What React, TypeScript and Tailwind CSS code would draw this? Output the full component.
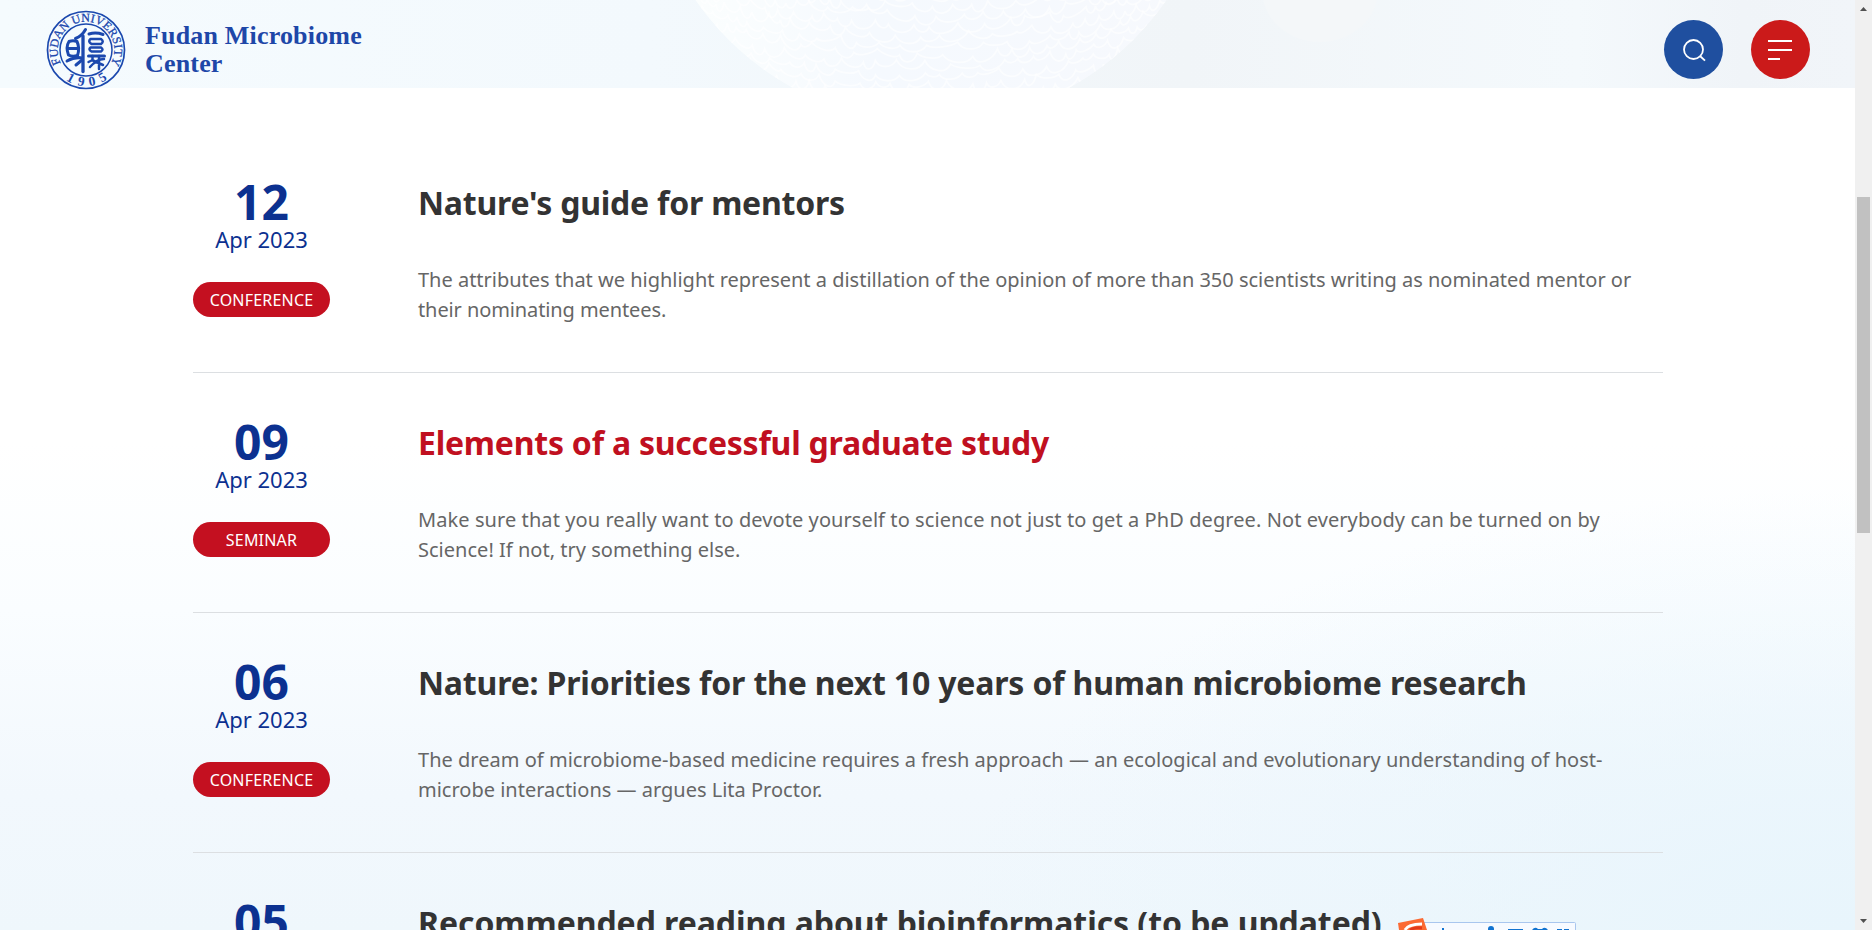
import React from "react";

type Line = { text: string; tracking: string };

type Item = {
  day: string;
  month?: string;
  tag?: string;
  title: string;
  titleTracking: string;
  lines: Line[];
  active?: boolean;
};

const items: Item[] = [
  {
    day: "12",
    month: "Apr 2023",
    tag: "CONFERENCE",
    title: "Nature's guide for mentors",
    titleTracking: "tracking-[-0.23px]",
    lines: [
      {
        text: "The attributes that we highlight represent a distillation of the opinion of more than 350 scientists writing as nominated mentor or",
        tracking: "tracking-[-0.01px]",
      },
      { text: "their nominating mentees.", tracking: "tracking-[-0.1px]" },
    ],
  },
  {
    day: "09",
    month: "Apr 2023",
    tag: "SEMINAR",
    title: "Elements of a successful graduate study",
    titleTracking: "tracking-[-0.23px]",
    lines: [
      {
        text: "Make sure that you really want to devote yourself to science not just to get a PhD degree. Not everybody can be turned on by",
        tracking: "tracking-[0.08px]",
      },
      { text: "Science! If not, try something else.", tracking: "tracking-[0.02px]" },
    ],
    active: true,
  },
  {
    day: "06",
    month: "Apr 2023",
    tag: "CONFERENCE",
    title: "Nature: Priorities for the next 10 years of human microbiome research",
    titleTracking: "tracking-[-0.18px]",
    lines: [
      {
        text: "The dream of microbiome-based medicine requires a fresh approach — an ecological and evolutionary understanding of host-",
        tracking: "tracking-[0.02px]",
      },
      { text: "microbe interactions — argues Lita Proctor.", tracking: "tracking-normal" },
    ],
  },
  {
    day: "05",
    title: "Recommended reading about bioinformatics (to be updated)",
    titleTracking: "tracking-[-0.06px]",
    lines: [],
  },
];

/* Scalloped cell outlines that cover the sphere behind the header. */
function cellPaths(): string[] {
  let seed = 7;
  const rnd = () => {
    seed = (seed * 16807) % 2147483647;
    return seed / 2147483647;
  };
  const out: string[] = [];
  for (let row = 0; row < 12; row++) {
    const y0 = -18 + row * 10;
    let x = 670 + rnd() * 14;
    const bow = (px: number) => 12 - Math.pow((px - 932) / 240, 2) * 38;
    let y = y0 + bow(x);
    let d = `M${x.toFixed(1)} ${y.toFixed(1)}`;
    while (x < 1190) {
      const edge = Math.abs(x - 932) / 260;
      const w = (23 - edge * 13) * (0.6 + rnd() * 0.8);
      const nx = x + w;
      const ny = y0 + bow(nx) + (rnd() - 0.5) * 7;
      const depth = 4 + rnd() * 8;
      d += ` C${(x + w * 0.2).toFixed(1)} ${(y + depth).toFixed(1)} ${(x + w * 0.8).toFixed(1)} ${(ny + depth).toFixed(1)} ${nx.toFixed(1)} ${ny.toFixed(1)}`;
      x = nx;
      y = ny;
    }
    out.push(d);
  }
  return out;
}
const cells = cellPaths();

function HeaderArt() {
  return (
    <svg className="absolute inset-0 h-full w-full" viewBox="0 0 1855 88" preserveAspectRatio="none" aria-hidden="true">
      <defs>
        <clipPath id="sphere-clip">
          <circle cx="931" cy="-163" r="286.600" />
        </clipPath>
        <linearGradient id="sphere-fill" x1="0" y1="0" x2="1" y2="0">
          <stop offset="0.1" stopColor="#fbfefe" />
          <stop offset="0.4" stopColor="#f5f9fe" />
          <stop offset="1" stopColor="#f7f9fd" />
        </linearGradient>
      </defs>
      <ellipse cx="1320" cy="-10" rx="58" ry="52" fill="#f4f7f9" />
      <g clipPath="url(#sphere-clip)">
        <circle cx="931" cy="-163" r="286.600" fill="url(#sphere-fill)" />
        {cells.map((d, i) => (
          <path key={i} d={d} fill="none" stroke="#ffffff" strokeOpacity="0.6" strokeWidth="1.8" />
        ))}
      </g>
    </svg>
  );
}

function Seal() {
  return (
    <svg className="h-20 w-20 shrink-0" viewBox="0 0 80 80" fill="none" stroke="#1b48ae" role="img">
      <defs>
        <path id="seal-top" d="M15.500 54.150 A28.300 28.300 0 1 1 64.500 54.150" />
        <path id="seal-bottom" d="M16.700 67.700 A36.200 36.200 0 0 0 63.300 67.700" />
      </defs>
      <circle cx="40" cy="40" r="38.500" strokeWidth="1.700" />
      <circle cx="40" cy="40" r="26" strokeWidth="1.500" />
      <g fill="#1b48ae" stroke="none" className="font-['Liberation_Serif',serif]">
        <text fontSize="12" textLength="117" lengthAdjust="spacingAndGlyphs" stroke="#1b48ae" strokeWidth="0.3">
          <textPath href="#seal-top" startOffset="1">FUDAN UNIVERSITY</textPath>
        </text>
        <text fontSize="13.500" textLength="44" lengthAdjust="spacing" fontWeight="bold">
          <textPath href="#seal-bottom" startOffset="4">1905</textPath>
        </text>
      </g>
      <g strokeWidth="3" strokeLinecap="round" strokeLinejoin="round">
        <path d="M23 31.500 Q27 30 31 31.500 Q34 38 31.500 45.500 Q26 47 22.500 45 Q19.500 37 23 31.500Z" />
        <path d="M21.500 38.500 H32" />
        <path d="M39.500 19.500 Q36 26 29.500 28.500" />
        <path d="M37 26 V61.500" strokeWidth="3.300" />
        <path d="M21 51 Q29 46.500 36 48" />
        <path d="M36 50 L30 55" />
        <path d="M43 24 Q50 22 57 24.500" />
        <path d="M44.500 29 H55 Q58.500 31.500 55 34 H45.500 Q41.500 31.500 44.500 29Z" strokeWidth="2.500" />
        <path d="M44.500 37.500 H55 Q58 39.500 55 41.500 H45.500 Q42 39.500 44.500 37.500Z" strokeWidth="2.500" />
        <path d="M42.500 46 H58.500" />
        <path d="M46.500 46 V50 L42.500 52 M53 46 V59 M44 57 Q51 49 58 49 M46 50 L57 55" strokeWidth="2.500" />
      </g>
    </svg>
  );
}

function Header() {
  return (
    <header className="relative h-[88px] shrink-0 bg-[linear-gradient(90deg,#f5fbfe_0%,#f3f9fd_35%,#f1f5f8_64%,#f4f9fc_85%,#f0f4f8_94%,#f1f5f9_100%)]">
      <HeaderArt />
      <div className="relative flex h-full items-start justify-between pl-[46px] pr-[45px]">
        <div className="flex items-start pt-[9.5px]">
          <Seal />
          <div className="ml-[19px] mt-[12px] whitespace-nowrap font-['Liberation_Serif',serif] text-[26px] font-bold leading-[28px] tracking-[0.18px] text-[#1e47a8]">
            <div>Fudan Microbiome</div>
            <div>Center</div>
          </div>
        </div>
        <div className="flex gap-7 pt-5">
          <button className="flex size-[59px] items-center justify-center rounded-full bg-[#1f4f9f]">
            <svg className="size-6" viewBox="0 0 24 24" fill="none" stroke="#fff" strokeWidth="1.8">
              <circle cx="11.500" cy="11.500" r="9.500" />
              <path d="M18 18 L23 22.700" />
            </svg>
          </button>
          <button className="flex size-[59px] flex-col items-start gap-[7px] rounded-full bg-[#cb1a1a] pl-[17px] pt-5">
            <span className="h-0.5 w-6 bg-white" />
            <span className="h-0.5 w-6 bg-white" />
            <span className="h-0.5 w-3 bg-white" />
          </button>
        </div>
      </div>
    </header>
  );
}

function NewsItem({ item }: { item: Item }) {
  return (
    <article className="flex h-60 shrink-0 border-b border-[#dcdfe2]">
      <div className="flex w-[137px] flex-col items-center">
        <div className="mt-[44px] text-[48px] font-bold leading-[49px] text-[#0c3190]">{item.day}</div>
        {item.month && <div className="text-[22px] leading-[26px] text-[#0c3190]">{item.month}</div>}
        {item.tag && (
          <div className="mt-[30px] flex h-[35px] w-full items-center justify-center rounded-full bg-[#c41020] text-base tracking-[0.2px] text-white">
            {item.tag}
          </div>
        )}
      </div>
      <div className="ml-[88px] flex-1 whitespace-nowrap">
        <h2
          className={`mt-[47px] text-[32px] font-bold leading-[46px] ${item.titleTracking} ${item.active ? "text-[#c01020]" : "text-[#333333]"}`}
        >
          {item.title}
        </h2>
        <div className="mt-[39px] text-[20px] leading-[30px] text-[#666666]">
          {item.lines.map((l) => (
            <p key={l.text} className={l.tracking}>
              {l.text}
            </p>
          ))}
        </div>
      </div>
    </article>
  );
}

function Scrollbar() {
  return (
    <div className="flex w-[17px] shrink-0 flex-col items-center bg-[#f0f0f0]">
      <svg className="h-[17px] w-[17px]" viewBox="0 0 17 17" fill="#505050">
        <path d="M5 11 L8.500 7 L12 11Z" />
      </svg>
      <div className="mt-[180px] h-[336px] w-[13px] bg-[#c1c1c1]" />
      <svg className="mt-auto h-[17px] w-[17px]" viewBox="0 0 17 17" fill="#505050">
        <path d="M5 6 L8.500 10 L12 6Z" />
      </svg>
    </div>
  );
}

function InputMethodBar() {
  return (
    <svg className="absolute bottom-0 left-[1396px] h-[14px] w-[184px]" viewBox="0 0 184 14" aria-hidden="true">
      <rect x="8" y="6.500" width="171.500" height="20" rx="1" fill="#f7faff" stroke="#a9c6ee" />
      <path d="M2 7 L27 2 L31 14 H3Z" fill="#fb6a33" />
      <path d="M9 14 Q12 8 26 8" fill="none" stroke="#fff" strokeWidth="3" />
      <path d="M14 14 Q18 11 26 12" fill="none" stroke="#e23a1a" strokeWidth="3" />
      <g fill="#1273d0">
        <path d="M46 12 h2 v2 h-2z" />
        <circle cx="95" cy="13" r="3" />
        <path d="M112 13 h15 v1 h-15z" />
        <path d="M136 14 q3 -4 6 -1 h4 q3 -3 6 1z" />
        <path d="M161 13 h5 v1 h-5z M168 13 h5 v1 h-5z" />
      </g>
    </svg>
  );
}

export default function App() {
  return (
    <div className="relative flex h-[930px] w-[1872px] overflow-hidden bg-white font-['Noto_Sans','Open_Sans',sans-serif]">
      <div className="flex min-w-0 flex-1 flex-col">
        <Header />
        <main className="flex min-h-0 flex-1 flex-col overflow-hidden bg-[radial-gradient(ellipse_900px_440px_at_100%_100%,#e8f5fc_0%,rgba(232,245,252,0)_100%),linear-gradient(180deg,#ffffff_0%,#ffffff_42%,#fafdff_62%,#f2f8fd_84%,#eff7fc_100%)] pl-[193px] pr-[192px] pt-[45px]">
          {items.map((item) => (
            <NewsItem key={item.day} item={item} />
          ))}
        </main>
      </div>
      <Scrollbar />
      <InputMethodBar />
    </div>
  );
}
